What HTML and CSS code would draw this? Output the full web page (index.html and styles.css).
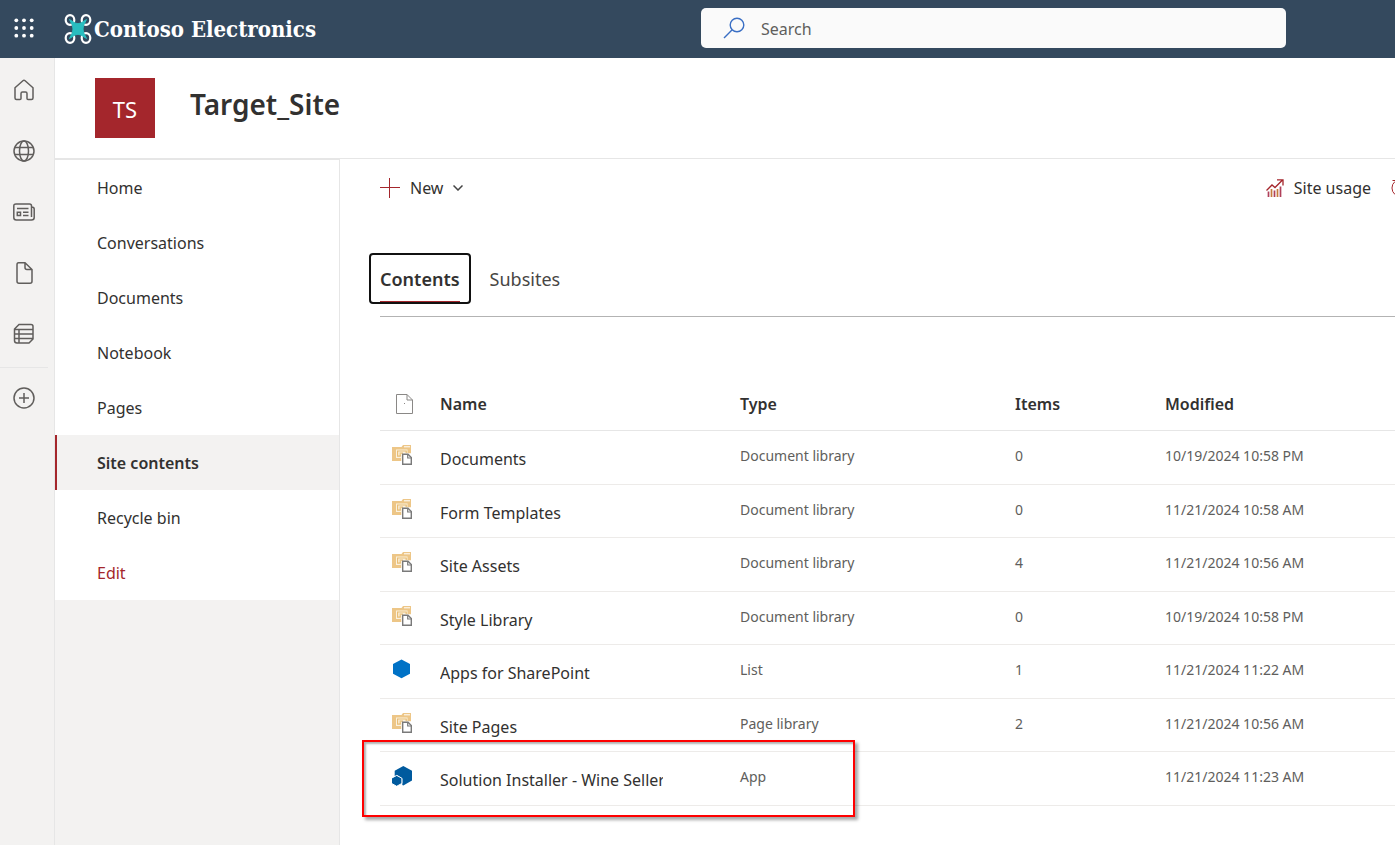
FILE: index.html
```html
<!DOCTYPE html>
<html lang="en">
<head>
    <meta charset="UTF-8">
    <meta name="viewport" content="width=device-width, initial-scale=1.0">
    <title>Target_Site - Site contents</title>
    <link rel="stylesheet" href="styles.css">
</head>
<body>
    <!-- shared icons -->
    <svg class="sprite" aria-hidden="true">
        <symbol id="library" viewBox="0 0 20 20">
            <path fill="#edc687" d="M0 2h9.500l1.500-2h8v8.300h-9.700V16H0z"/>
            <path fill="#fff" d="M12 1.300h6v1h-6z"/>
            <path fill="#fbf1de" d="M4 4.600h11.500v3.700H9.300v4.700H4z"/>
            <path fill="none" stroke="#e8bd74" stroke-width="1.200" d="M8.800 11.200H5.600V6h8.600v2M7.500 8.200h3.500M7.500 9.800h1.500"/>
            <path fill="#fff" stroke="#7a7a7a" stroke-width="1.400" d="M10.700 9.300h5.300l3.300 3.300v6.700h-8.600z"/>
            <path fill="none" stroke="#7a7a7a" stroke-width="1.200" d="M15.700 9.300v3.700h3.600"/>
        </symbol>
        <symbol id="list-app" viewBox="0 0 20 20">
            <path fill="#0072c6" d="M9.500.5l8.500 4.600v9.600l-8.500 4.600-8.500-4.600V5.100z"/>
        </symbol>
        <symbol id="app" viewBox="0 0 20 20">
            <path fill="#005a9e" d="M11.300 0L20 4.800v9.600l-8.700 5.100-1-.6v-6.200L5.300 9.300 2.700 10.500V4.800z"/>
            <path fill="#005a9e" stroke="#fff" d="M4.700 9.400l5.200 2.800v5.200l-5.200 2.900-5.200-2.900v-5.200z"/>
        </symbol>
    </svg>

    <header class="suite-bar">
        <button class="waffle" type="button" aria-label="App launcher">
            <svg width="20" height="20" viewBox="0 0 20 20" fill="#fff">
                <circle cx="2.300" cy="2.300" r="1.900"/><circle cx="10" cy="2.300" r="1.900"/><circle cx="17.700" cy="2.300" r="1.900"/>
                <circle cx="2.300" cy="10" r="1.900"/><circle cx="10" cy="10" r="1.900"/><circle cx="17.700" cy="10" r="1.900"/>
                <circle cx="2.300" cy="17.700" r="1.900"/><circle cx="10" cy="17.700" r="1.900"/><circle cx="17.700" cy="17.700" r="1.900"/>
            </svg>
        </button>
        <a class="brand" href="#">
            <svg width="28" height="32" viewBox="0 0 28 32">
                <g fill="none" stroke="#fff" stroke-width="2.200">
                    <ellipse cx="6" cy="7" rx="4.300" ry="4.800"/>
                    <ellipse cx="22" cy="7" rx="4.300" ry="4.800"/>
                    <ellipse cx="6" cy="25" rx="4.300" ry="4.800"/>
                    <ellipse cx="22" cy="25" rx="4.300" ry="4.800"/>
                </g>
                <path fill="#29bdbf" stroke="#29bdbf" stroke-width="1" stroke-linejoin="round" d="M5.500 6.500L11 10Q14 11.500 17 10L22.500 6.500 19.500 12.500Q18.500 16 19.500 19.500L22.500 25.500 17 22Q14 20.500 11 22L5.500 25.500 8.500 19.500Q9.500 16 8.500 12.500Z"/>
            </svg>
            <span>Contoso Electronics</span>
        </a>
        <form class="search">
            <svg width="22" height="22" viewBox="0 0 22 22" fill="none" stroke="#3a6fc4" stroke-width="1.400">
                <circle cx="14" cy="8" r="6.800"/><path d="M9.200 12.800L1 21"/>
            </svg>
            <input type="search" placeholder="Search" aria-label="Search">
        </form>
    </header>

    <div class="page">
        <nav class="rail" aria-label="Global">
            <a href="#" aria-label="Home"><svg width="22" height="22" viewBox="0 0 22 22"><path d="M2 8.800L9.900 1.700q1.100-1 2.200 0L20 8.800V19q0 1.500-1.500 1.500H15q-1 0-1-1V14.500q0-1.500-1.500-1.500h-3Q8 13 8 14.500v5q0 1-1 1H3.500Q2 20.500 2 19z"/></svg></a>
            <a href="#" aria-label="Sites"><svg width="22" height="22" viewBox="0 0 22 22"><circle cx="11" cy="11" r="10"/><ellipse cx="11" cy="11" rx="4.500" ry="10"/><path d="M2 7.500h18M2 14.500h18"/></svg></a>
            <a href="#" aria-label="News"><svg width="22" height="22" viewBox="0 0 22 22"><path d="M18.500 16V5q0-2-2-2H3Q.8 3 .8 5v11.500q0 2.500 2.500 2.500h15.200q2.700 0 2.700-2.500V8q0-2-2.700-2M4 7.500h11.500M10 11.200h5.500M10 14.500h5.500M4.300 11.200h3.200v3.300H4.300z"/></svg></a>
            <a href="#" aria-label="Files"><svg width="22" height="22" viewBox="0 0 22 22"><path d="M5.500.8H12l7 6.700v11.700q0 2-2 2H6q-2 0-2-2V2.800q0-2 1.500-2zM12 1v4.500q0 2 2 2h5"/></svg></a>
            <a href="#" aria-label="Lists"><svg width="22" height="22" viewBox="0 0 22 22"><path d="M6 1.500h12q2 0 2 2V16l-4 4H4q-2.500 0-2.500-2.500V6zM1.500 6.500H20M1.500 11H20M1.500 15.500H20M6 6.500V20"/></svg></a>
            <a class="create" href="#" aria-label="Create"><svg width="22" height="22" viewBox="0 0 22 22"><circle cx="11" cy="11" r="10"/><path d="M11 6v10M6 11h10"/></svg></a>
        </nav>

        <div class="site">
            <div class="site-header">
                <div class="site-logo">TS</div>
                <h1>Target_Site</h1>
            </div>

            <div class="site-body">
                <nav class="side-nav" aria-label="Site">
                    <ul>
                        <li><a href="#">Home</a></li>
                        <li><a href="#">Conversations</a></li>
                        <li><a href="#">Documents</a></li>
                        <li><a href="#">Notebook</a></li>
                        <li><a href="#">Pages</a></li>
                        <li><a class="active" href="#">Site contents</a></li>
                        <li><a href="#">Recycle bin</a></li>
                        <li><a class="edit" href="#">Edit</a></li>
                    </ul>
                </nav>

                <main class="content">
                    <div class="command-bar">
                        <button type="button">
                            <svg width="20" height="20" viewBox="0 0 20 20" fill="none" stroke="#a4262c"><path d="M9.500 0v20M0 9.500h20"/></svg>
                            New
                            <svg width="10" height="6" viewBox="0 0 10 6" fill="none" stroke="#444" stroke-width="1.500"><path d="M.5.5L5 5 9.500.5"/></svg>
                        </button>
                        <div class="far-items">
                            <button type="button">
                                <svg width="18" height="18" viewBox="0 0 18 18" fill="none">
                                    <path stroke="#a4262c" stroke-width="1.300" d="M.5 11.500L6 6l3 2.500L16.500 1M11 .8h6v5.700"/>
                                    <path stroke="#b0405a" stroke-width="1.700" d="M2.500 12.500V18M8.500 11.500V18M14.500 7.500V18"/>
                                    <path stroke="#c77a3c" stroke-width="1.700" d="M5.500 10V18M11.500 10V18"/>
                                </svg>
                                Site usage
                            </button>
                            <button class="workflows" type="button" aria-label="Site workflows">
                                <svg width="20" height="20" viewBox="0 0 20 20" fill="none" stroke="#a4262c"><path d="M4 3.500a8.500 8.500 0 0 0 0 13M1.500 2.500h3.500v3.500M16 3.500a8.500 8.500 0 0 1 0 13"/></svg>
                            </button>
                        </div>
                    </div>

                    <div class="tabs" role="tablist">
                        <button class="tab selected" type="button" role="tab" aria-selected="true"><span>Contents</span></button>
                        <button class="tab" type="button" role="tab" aria-selected="false"><span>Subsites</span></button>
                    </div>

                    <div class="list">
                        <table>
                            <thead>
                                <tr>
                                    <th class="col-icon"><svg width="17" height="20" viewBox="0 0 17 20" fill="none" stroke="#8a8886"><path d="M.5.500h10.500l5.500 5.500v13.500H.5zM11 .5V6h5.500M8 9.500h1"/></svg></th>
                                    <th class="col-name">Name</th>
                                    <th class="col-type">Type</th>
                                    <th class="col-items">Items</th>
                                    <th>Modified</th>
                                </tr>
                            </thead>
                            <tbody>
                                <tr><td><svg class="icon"><use href="#library"/></svg></td><td><a href="#">Documents</a></td><td>Document library</td><td>0</td><td>10/19/2024 10:58 PM</td></tr>
                                <tr><td><svg class="icon"><use href="#library"/></svg></td><td><a href="#">Form Templates</a></td><td>Document library</td><td>0</td><td>11/21/2024 10:58 AM</td></tr>
                                <tr><td><svg class="icon"><use href="#library"/></svg></td><td><a href="#">Site Assets</a></td><td>Document library</td><td>4</td><td>11/21/2024 10:56 AM</td></tr>
                                <tr><td><svg class="icon"><use href="#library"/></svg></td><td><a href="#">Style Library</a></td><td>Document library</td><td>0</td><td>10/19/2024 10:58 PM</td></tr>
                                <tr><td><svg class="icon"><use href="#list-app"/></svg></td><td><a href="#">Apps for SharePoint</a></td><td>List</td><td>1</td><td>11/21/2024 11:22 AM</td></tr>
                                <tr><td><svg class="icon"><use href="#library"/></svg></td><td><a href="#">Site Pages</a></td><td>Page library</td><td>2</td><td>11/21/2024 10:56 AM</td></tr>
                                <tr><td><svg class="icon"><use href="#app"/></svg></td><td><a href="#">Solution Installer - Wine Seller</a></td><td>App</td><td></td><td>11/21/2024 11:23 AM</td></tr>
                            </tbody>
                        </table>
                        <div class="highlight"></div>
                    </div>
                </main>
            </div>
        </div>
    </div>
</body>
</html>
```
FILE: styles.css
```css
* {
    box-sizing: border-box;
}
body {
    margin: 0;
    min-height: 100vh;
    display: flex;
    flex-direction: column;
    font-family: "Noto Sans", "Open Sans", sans-serif;
    font-size: 16px;
    line-height: 24px;
    color: #323130;
    background-color: #fff;
}
a {
    color: inherit;
    text-decoration: none;
}
button {
    padding: 0;
    border: none;
    background: none;
    font: inherit;
    color: inherit;
    cursor: pointer;
}
svg {
    display: block;
    flex: none;
}
.sprite {
    position: absolute;
    width: 0;
    height: 0;
}

/* top bar */
.suite-bar {
    display: flex;
    align-items: center;
    height: 58px;
    padding-right: 109px;
    background-color: #34495e;
}
.waffle {
    padding: 0 15px 2px 14px;
}
.brand {
    display: flex;
    align-items: center;
    gap: 2px;
    margin-left: 15px;
    margin-right: auto;
    font-family: "DejaVu Serif Condensed", "DejaVu Serif", serif;
    font-size: 22px;
    font-weight: bold;
    color: #fff;
    white-space: nowrap;
}
.search {
    display: flex;
    align-items: center;
    gap: 16px;
    flex: 0 1 585px;
    height: 40px;
    margin-bottom: 2px;
    padding: 0 22px;
    background-color: #fafafa;
    border-radius: 5px;
}
.search input {
    flex: 1;
    min-width: 0;
    padding: 2px 0 0;
    border: none;
    outline: none;
    background: none;
    font: inherit;
}
.search input::placeholder {
    color: #605e5c;
    opacity: 1;
}

/* icon rail */
.page {
    flex: 1;
    display: flex;
}
.rail {
    flex: none;
    width: 55px;
    padding: 1px 6px 0 0;
    background-color: #f3f2f1;
    border-right: 1px solid #e6e6e6;
}
.rail a {
    display: flex;
    align-items: center;
    justify-content: center;
    height: 61px;
}
.rail svg {
    fill: none;
    stroke: #605e5c;
    stroke-width: 1.5;
}
.rail .create {
    margin-top: 3px;
    border-top: 1px solid #e6e6e6;
}

.site {
    flex: 1;
    min-width: 0;
    display: flex;
    flex-direction: column;
}
.site-header {
    display: flex;
    gap: 35px;
    padding: 20px 40px;
    border-bottom: 1px solid #e6e6e6;
}
.site-logo {
    width: 60px;
    height: 60px;
    background-color: #a4262c;
    color: #fff;
    font-size: 22px;
    line-height: 62px;
    text-align: center;
}
h1 {
    margin: 8px 0 0;
    font-size: 28px;
    font-weight: 600;
    line-height: 36px;
}
.site-body {
    flex: 1;
    display: flex;
}

/* left navigation */
.side-nav {
    flex: none;
    width: 285px;
    background-color: #f3f2f1;
    border-top: 1px solid #e6e6e6;
    border-right: 1px solid #e6e6e6;
}
.side-nav ul {
    margin: 0;
    padding: 0;
    list-style: none;
    background-color: #fff;
}
.side-nav a {
    display: block;
    padding: 2px 0 0 40px;
    border-left: 2px solid transparent;
    line-height: 53px;
}
.side-nav .active {
    border-left-color: #a4262c;
    background-color: #f3f2f1;
    font-weight: 600;
}
.side-nav .edit {
    color: #a4262c;
}

.content {
    flex: 1;
    min-width: 0;
    padding-left: 40px;
    overflow: hidden;
}
.command-bar,
.command-bar button,
.far-items {
    display: flex;
    align-items: center;
}
.command-bar {
    justify-content: space-between;
    height: 58px;
}
.command-bar button {
    gap: 10px;
}
.far-items {
    gap: 20px;
}
/* next command runs past the edge */
.far-items .workflows {
    margin-right: -16px;
}

/* tabs */
.tabs {
    display: flex;
    gap: 8px;
    margin-top: 36px;
    padding-bottom: 12px;
    font-size: 18px;
    border-bottom: 1px solid #b3b3b3;
}
.tab {
    padding: 0 9px;
    height: 51px;
    border: 2px solid transparent;
    border-radius: 4px;
}
.tab span {
    display: block;
    padding-top: 2px;
    line-height: 45px;
    color: #484644;
}
.tab.selected {
    margin-left: -11px;
    border-color: #111;
}
.tab.selected span {
    font-weight: 600;
    color: #323130;
    box-shadow: inset 0 -1px #a4262c;
}

/* contents list */
.list {
    position: relative;
    margin-top: 60px;
}
table {
    width: 100%;
    table-layout: fixed;
    border-collapse: separate;
    border-spacing: 0;
}
th {
    height: 54px;
    padding: 0;
    border-bottom: 1px solid #e6e6e6;
    font-weight: 600;
    text-align: left;
}
th svg {
    margin-left: 16px;
}
td {
    height: 54px;
    padding: 13px 0 0;
    border-bottom: 1px solid #edebe9;
    vertical-align: top;
    font-size: 14px;
    color: #605e5c;
}
tr:nth-child(even) td {
    height: 53px;
}
td a {
    display: block;
    width: 223px;
    padding-top: 3px;
    overflow: hidden;
    white-space: nowrap;
    font-size: 16px;
    color: #323130;
}
.icon {
    width: 20px;
    height: 20px;
    margin: 1px 0 0 12px;
}
.col-icon {
    width: 60px;
}
.col-name {
    width: 300px;
}
.col-type {
    width: 275px;
}
.col-items {
    width: 150px;
}
.highlight {
    position: absolute;
    left: -18px;
    bottom: -11px;
    width: 493px;
    height: 77px;
    border: 2px solid #f00;
    box-shadow: 3px 3px 3px rgba(0, 0, 0, 0.35), inset 2px 2px 2px rgba(0, 0, 0, 0.3);
    pointer-events: none;
}
```
